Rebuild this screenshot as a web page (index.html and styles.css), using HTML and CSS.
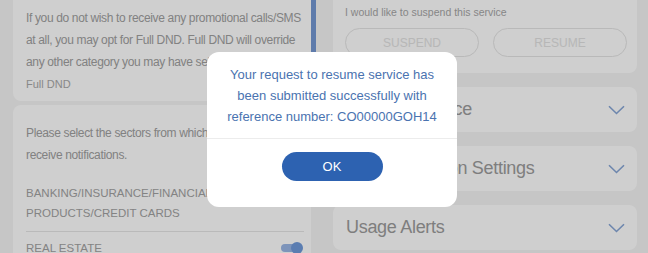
FILE: index.html
```html
<!DOCTYPE html>
<html lang="en">

<head>
  <meta charset="UTF-8">
  <meta name="viewport" content="width=device-width, initial-scale=1.0">
  <title>DND Preferences</title>
  <link rel="stylesheet" href="styles.css">
</head>

<body>
  <div class="page">
    <div class="col-left">
      <section class="card card-dnd">
        <p class="intro">If you do not wish to receive any promotional calls/SMS at all, you may opt for Full DND. Full DND will override any other category you may have selected.</p>
        <div class="label">Full DND</div>
      </section>

      <section class="card card-sectors">
        <p class="intro">Please select the sectors from which you wish to<br>receive notifications.</p>
        <div class="sector">BANKING/INSURANCE/FINANCIAL<br>PRODUCTS/CREDIT CARDS</div>
        <div class="sector sector-row">
          <span>REAL ESTATE</span>
          <span class="toggle on"></span>
        </div>
      </section>
    </div>

    <div class="gutter">
      <div class="thumb"></div>
    </div>

    <div class="col-right">
      <section class="card suspend">
        <p class="hint">I would like to suspend this service</p>
        <div class="pills">
          <button class="pill" disabled>SUSPEND</button>
          <button class="pill" disabled>RESUME</button>
        </div>
      </section>

      <section class="card accordion">
        <span class="accordion-title">Manage Service</span>
        <svg class="chevron" width="17" height="10" viewBox="0 0 17 10"><path d="M1 1.2 L8.5 8.5 L16 1.2" fill="none" stroke="currentColor" stroke-width="1.6"/></svg>
      </section>

      <section class="card accordion">
        <span class="accordion-title">Communication Settings</span>
        <svg class="chevron" width="17" height="10" viewBox="0 0 17 10"><path d="M1 1.2 L8.5 8.5 L16 1.2" fill="none" stroke="currentColor" stroke-width="1.6"/></svg>
      </section>

      <section class="card accordion">
        <span class="accordion-title">Usage Alerts</span>
        <svg class="chevron" width="17" height="10" viewBox="0 0 17 10"><path d="M1 1.2 L8.5 8.5 L16 1.2" fill="none" stroke="currentColor" stroke-width="1.6"/></svg>
      </section>
    </div>
  </div>

  <div class="overlay"></div>

  <div class="modal" role="dialog">
    <p class="modal-text">Your request to resume service has been submitted successfully with reference number: CO00000GOH14</p>
    <div class="modal-actions">
      <button class="btn-ok">OK</button>
    </div>
  </div>
</body>

</html>
```

FILE: styles.css
```css
* {
  box-sizing: border-box;
}

body {
  margin: 0;
  height: 253px;
  overflow: hidden;
  background-color: #f4f4f4;
  font-family: "Liberation Sans", Arial, sans-serif;
}

.page {
  display: flex;
  height: 253px;
  overflow: hidden;
  padding: 0 11px 0 13px;
}

.col-left {
  width: 298px;
}

.gutter {
  width: 22px;
}

.thumb {
  width: 5px;
  height: 60px;
  background-color: #7498d3;
}

.col-right {
  width: 304px;
}

.card {
  background-color: #fff;
}

.intro {
  margin: 0;
  font-size: 12px;
  letter-spacing: -0.35px;
  line-height: 22px;
  color: #a0a0a0;
}

.card-dnd {
  padding: 7px 6px 6px 13px;
  border-radius: 0 0 8px 8px;
}

.label {
  font-size: 11px;
  line-height: 22px;
  color: #a8a8a8;
}

.card-sectors {
  margin-top: 4px;
  padding: 17px 7px 0 13px;
  border-radius: 8px 8px 0 0;
  height: 160px;
}

.sector {
  margin-top: 17px;
  padding-bottom: 8px;
  font-size: 11.5px;
  line-height: 20px;
  color: #a2a2a2;
  border-bottom: 1px solid #e6e6e6;
}

.sector-row {
  margin-top: 0;
  padding-top: 5px;
  display: flex;
  align-items: center;
  justify-content: space-between;
  line-height: 22px;
  border-bottom: none;
}

.toggle {
  position: relative;
  width: 20px;
  height: 8px;
  margin-right: 3px;
  border-radius: 4px;
  background-color: #9ab7e6;
}

.toggle.on::after {
  content: "";
  position: absolute;
  right: -2px;
  top: -2px;
  width: 12px;
  height: 12px;
  border-radius: 50%;
  background-color: #709adb;
}

.suspend {
  padding: 4px 10px 16px 12px;
  border-radius: 0 0 8px 8px;
}

.hint {
  margin: 0 0 8px;
  font-size: 10.5px;
  line-height: 16px;
  color: #a6a6a6;
}

.pills {
  display: grid;
  grid-template-columns: 1fr 1fr;
  gap: 14px;
}

.pill {
  height: 29px;
  border: 1px solid #e4e4e4;
  border-radius: 15px;
  background: #fff;
  font-family: inherit;
  font-size: 12px;
  color: #e2e2e2;
}

.accordion {
  height: 45px;
  margin-top: 14px;
  padding: 0 12px 0 13px;
  display: flex;
  align-items: center;
  justify-content: space-between;
  border-radius: 8px;
}

.accordion-title {
  font-size: 18px;
  letter-spacing: -0.3px;
  color: #9c9c9c;
}

.chevron {
  color: #87a6d6;
}

.overlay {
  position: fixed;
  inset: 0;
  background-color: rgba(0, 0, 0, 0.19);
}

.modal {
  position: fixed;
  left: 207px;
  top: 52px;
  width: 250px;
  height: 155px;
  background-color: #fff;
  border-radius: 12px;
}

.modal-text {
  margin: 0;
  padding: 12px 10px 11px;
  font-size: 13px;
  line-height: 21px;
  text-align: center;
  color: #4a73b0;
  border-bottom: 1px solid #ececec;
}

.modal-actions {
  display: flex;
  justify-content: center;
  padding-top: 13px;
}

.btn-ok {
  width: 101px;
  height: 29px;
  border: none;
  border-radius: 15px;
  background-color: #2d62b1;
  color: #fff;
  font-family: inherit;
  font-size: 13px;
}
```
